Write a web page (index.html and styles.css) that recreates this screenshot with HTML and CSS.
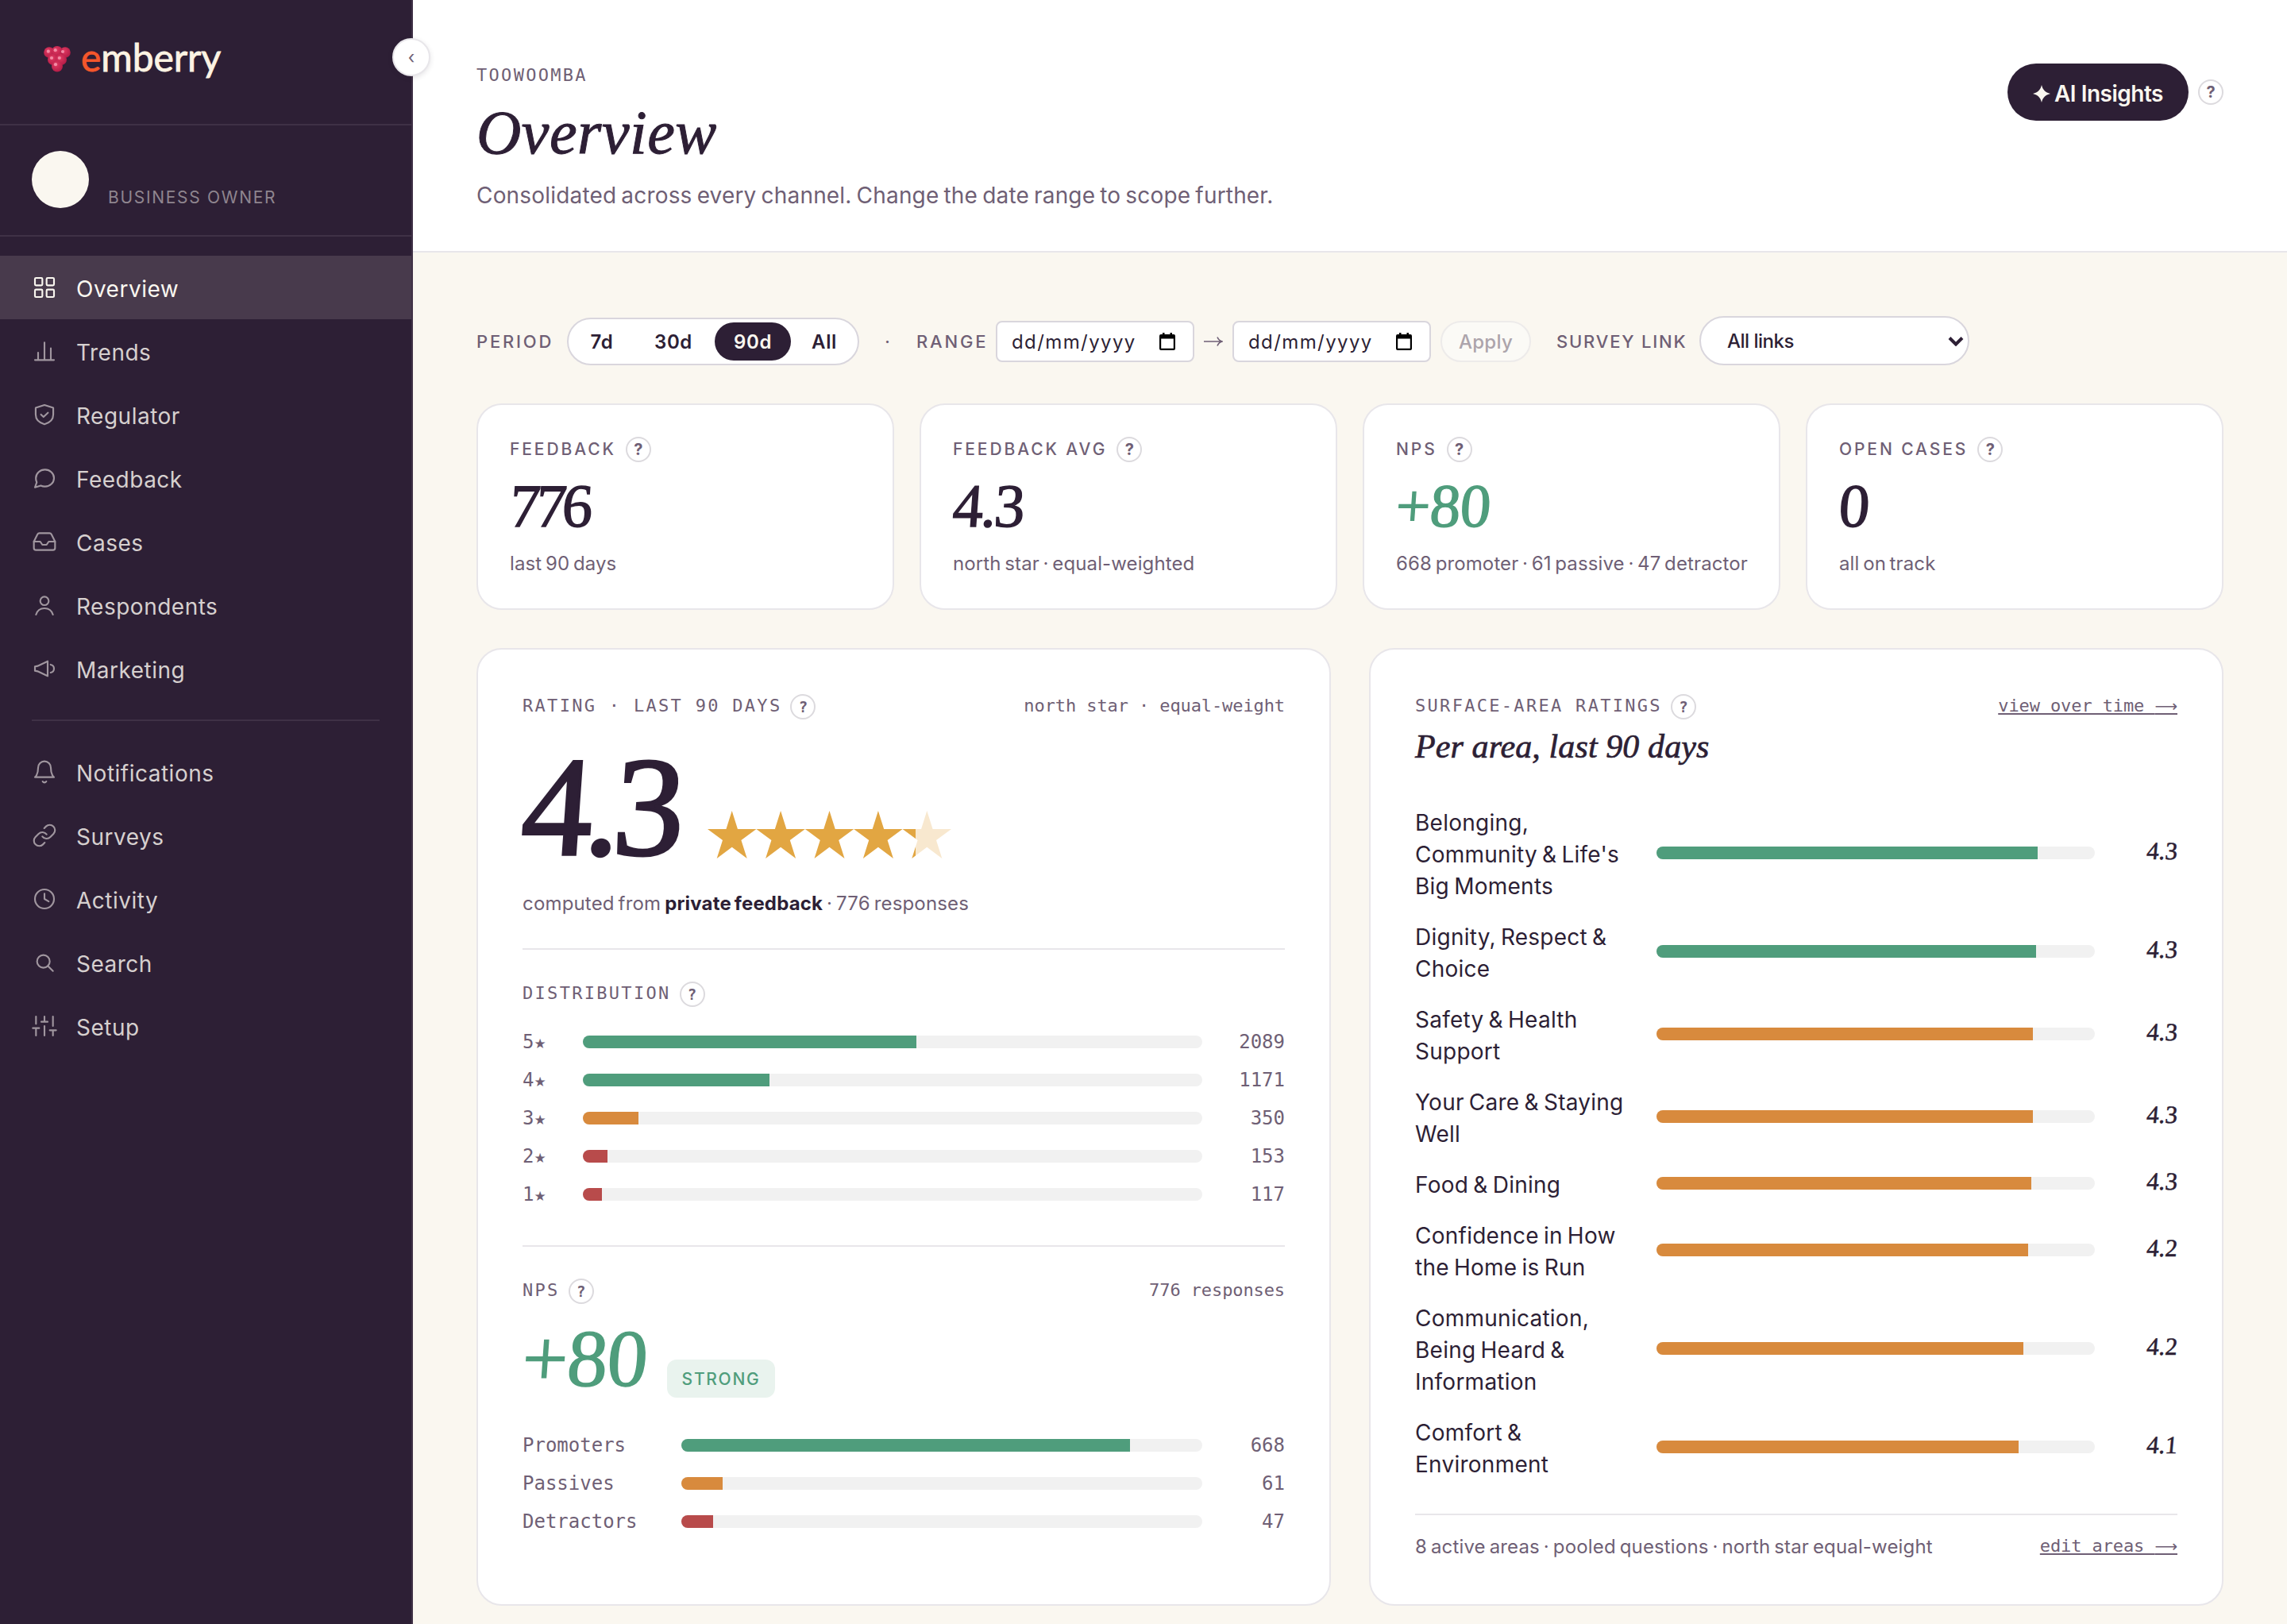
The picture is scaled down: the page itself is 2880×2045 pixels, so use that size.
FILE: index.html
```html
<!DOCTYPE html>
<html lang="en">
<head>
    <meta charset="UTF-8">
    <meta name="viewport" content="width=device-width, initial-scale=1.0">
    <title>Overview - emberry</title>
    <link rel="stylesheet" href="styles.css">
</head>
<body>
    <aside class="sidebar">
        <div class="brand">
            <svg class="brand-mark" viewBox="0 0 36 36">
                <defs>
                    <radialGradient id="drupe" cx="0.4" cy="0.35" r="0.7">
                        <stop offset="0" stop-color="#e23a62"/>
                        <stop offset="1" stop-color="#b01a45"/>
                    </radialGradient>
                </defs>
                <g fill="url(#drupe)">
                    <circle cx="8" cy="10" r="6.8"/>
                    <circle cx="28" cy="10" r="6.8"/>
                    <circle cx="18" cy="9.2" r="7.2"/>
                    <circle cx="13" cy="19" r="7"/>
                    <circle cx="23" cy="19" r="7"/>
                    <circle cx="18" cy="27.6" r="7"/>
                </g>
                <g fill="#f28ba4">
                    <circle cx="6.8" cy="8.7" r="2.1"/>
                    <circle cx="15.7" cy="7.2" r="2.1"/>
                    <circle cx="25" cy="9" r="2.1"/>
                    <circle cx="11" cy="17" r="2.1"/>
                    <circle cx="20.8" cy="17" r="2.1"/>
                    <circle cx="16" cy="25.2" r="2.1"/>
                </g>
            </svg>
            <span class="brand-name"><span class="brand-e">e</span>mberry</span>
        </div>
        <button class="collapse">‹</button>

        <div class="profile">
            <div class="avatar"></div>
            <div class="role">BUSINESS OWNER</div>
        </div>

        <nav class="nav">
            <a class="nav-item active">
                <svg viewBox="0 0 24 24"><rect x="3" y="3" width="7" height="7" rx="1"/><rect x="14" y="3" width="7" height="7" rx="1"/><rect x="3" y="14" width="7" height="7" rx="1"/><rect x="14" y="14" width="7" height="7" rx="1"/></svg>
                <span>Overview</span>
            </a>
            <a class="nav-item">
                <svg viewBox="0 0 24 24"><path d="M3 20.500h18M6 20v-6.500M12 20V4M18 20V9.500"/></svg>
                <span>Trends</span>
            </a>
            <a class="nav-item">
                <svg viewBox="0 0 24 24"><path d="M12 3l8.300 2.700v6.300c0 5-3.500 7.800-8.300 9.200-4.800-1.400-8.300-4.200-8.300-9.200V5.700z"/><path d="M8.700 12l2.400 2.300 4.200-4"/></svg>
                <span>Regulator</span>
            </a>
            <a class="nav-item">
                <svg viewBox="0 0 24 24"><path d="M21 12a8.400 8 0 0 1-8.500 8 9 9 0 0 1-4-.9L3 20.800l1.700-4.800a7.600 7.600 0 0 1-.8-4A8.500 8 0 0 1 12.500 4 8.400 8 0 0 1 21 12z"/></svg>
                <span>Feedback</span>
            </a>
            <a class="nav-item">
                <svg viewBox="0 0 24 24"><path d="M22 12h-6l-2 3h-4l-2-3H2"/><path d="M5.450 5.110L2 12v6a2 2 0 0 0 2 2h16a2 2 0 0 0 2-2v-6l-3.450-6.890A2 2 0 0 0 16.760 4H7.240a2 2 0 0 0-1.790 1.110z"/></svg>
                <span>Cases</span>
            </a>
            <a class="nav-item">
                <svg viewBox="0 0 24 24"><circle cx="12" cy="8" r="4"/><path d="M4 21c1.200-4 4.300-6 8-6s6.800 2 8 6"/></svg>
                <span>Respondents</span>
            </a>
            <a class="nav-item">
                <svg viewBox="0 0 24 24"><path d="M3 10v4l2.500.5L15 19V5L5.500 9.500z"/><path d="M17.800 8.200a3.800 3.800 0 0 1 0 7.500"/></svg>
                <span>Marketing</span>
            </a>

            <div class="nav-divider"></div>

            <a class="nav-item">
                <svg viewBox="0 0 24 24"><path d="M18 8A6 6 0 0 0 6 8c0 7-3 9-3 9h18s-3-2-3-9"/><path d="M13.730 21a2 2 0 0 1-3.460 0"/></svg>
                <span>Notifications</span>
            </a>
            <a class="nav-item">
                <svg viewBox="0 0 24 24"><path d="M10 13a5 5 0 0 0 7.540.54l3-3a5 5 0 0 0-7.070-7.070l-1.720 1.710"/><path d="M14 11a5 5 0 0 0-7.540-.54l-3 3a5 5 0 0 0 7.070 7.070l1.710-1.710"/></svg>
                <span>Surveys</span>
            </a>
            <a class="nav-item">
                <svg viewBox="0 0 24 24"><circle cx="12" cy="12" r="9"/><path d="M12 7v5l4 2.300"/></svg>
                <span>Activity</span>
            </a>
            <a class="nav-item">
                <svg viewBox="0 0 24 24"><circle cx="11" cy="11" r="6"/><path d="M20 20l-4.700-4.700"/></svg>
                <span>Search</span>
            </a>
            <a class="nav-item">
                <svg viewBox="0 0 24 24"><path d="M4 21v-7M4 10V3M12 21v-9M12 8V3M20 21v-5M20 12V3M1 14h6M9 8h6M17 16h6"/></svg>
                <span>Setup</span>
            </a>
        </nav>
    </aside>

    <main class="main">
        <header class="page-header">
            <div>
                <div class="site">TOOWOOMBA</div>
                <h1>Overview</h1>
                <p class="lede">Consolidated across every channel. Change the date range to scope further.</p>
            </div>
            <div class="header-actions">
                <button class="insights">
                    <svg viewBox="0 0 22 22"><path d="M11 0c1.600 6.400 4.600 9.400 11 11-6.400 1.600-9.400 4.600-11 11-1.600-6.400-4.600-9.400-11-11 6.400-1.600 9.400-4.600 11-11z"/></svg>
                    <span>AI Insights</span>
                </button>
                <span class="help">?</span>
            </div>
        </header>

        <div class="content">
            <!-- Filters -->
            <div class="filters">
                <div class="filter-group">
                    <span class="filter-label period">PERIOD</span>
                    <div class="segmented">
                        <button>7d</button>
                        <button>30d</button>
                        <button class="selected">90d</button>
                        <button>All</button>
                    </div>
                </div>
                <span class="dot">·</span>
                <div class="filter-group range-group">
                    <span class="filter-label range">RANGE</span>
                    <div class="date">
                        <span>dd/mm/yyyy</span>
                        <svg viewBox="0 0 20 22"><path fill-rule="evenodd" d="M4 0h2.500v2h7V0H16v2h2a2 2 0 0 1 2 2v16a2 2 0 0 1-2 2H2a2 2 0 0 1-2-2V4a2 2 0 0 1 2-2h2zM2.200 7.500v12.300h15.600V7.500z"/></svg>
                    </div>
                    <svg class="to" viewBox="0 0 24 16"><path d="M0 8h23M17 2.500c1.200 3 3 4.700 6 5.500-3 .8-4.800 2.500-6 5.500"/></svg>
                    <div class="date">
                        <span>dd/mm/yyyy</span>
                        <svg viewBox="0 0 20 22"><path fill-rule="evenodd" d="M4 0h2.500v2h7V0H16v2h2a2 2 0 0 1 2 2v16a2 2 0 0 1-2 2H2a2 2 0 0 1-2-2V4a2 2 0 0 1 2-2h2zM2.200 7.500v12.300h15.600V7.500z"/></svg>
                    </div>
                    <button class="apply" disabled>Apply</button>
                </div>
                <div class="filter-group">
                    <span class="filter-label survey">SURVEY LINK</span>
                    <div class="select">
                        <span>All links</span>
                        <svg viewBox="0 0 20 13"><path d="M2 2.500l8 8 8-8"/></svg>
                    </div>
                </div>
            </div>

            <!-- Headline numbers -->
            <section class="kpis">
                <div class="kpi">
                    <div class="kpi-label">FEEDBACK <span class="help">?</span></div>
                    <div class="kpi-value tight">776</div>
                    <div class="kpi-note">last 90 days</div>
                </div>
                <div class="kpi">
                    <div class="kpi-label">FEEDBACK AVG <span class="help">?</span></div>
                    <div class="kpi-value">4.3</div>
                    <div class="kpi-note">north star · equal-weighted</div>
                </div>
                <div class="kpi">
                    <div class="kpi-label">NPS <span class="help">?</span></div>
                    <div class="kpi-value good">+80</div>
                    <div class="kpi-note">668 promoter · 61 passive · 47 detractor</div>
                </div>
                <div class="kpi">
                    <div class="kpi-label">OPEN CASES <span class="help">?</span></div>
                    <div class="kpi-value">0</div>
                    <div class="kpi-note">all on track</div>
                </div>
            </section>

            <section class="panels">
                <div class="panel">
                    <div class="panel-head">
                        <span class="eyebrow">RATING · LAST 90 DAYS</span>
                        <span class="help mono">?</span>
                        <span class="aside">north star · equal-weight</span>
                    </div>
                    <div class="rating">
                        <span class="rating-value">4.3</span>
                        <svg class="stars" viewBox="0 0 307 60">
                            <defs>
                                <linearGradient id="score" gradientUnits="userSpaceOnUse" x1="0" y1="0" x2="307" y2="0">
                                    <stop offset="0.852" stop-color="#e2a642"/>
                                    <stop offset="0.852" stop-color="#f8e8cf"/>
                                </linearGradient>
                            </defs>
                            <path fill="url(#score)" d="M30.700 0l7.250 22.900h23.450l-19 14.200 7.300 22.900-19-14.200-19 14.200 7.300-22.900-19-14.200h23.450zM92.100 0l7.250 22.900h23.450l-19 14.200 7.300 22.900-19-14.200-19 14.200 7.300-22.900-19-14.200h23.450zM153.500 0l7.250 22.900h23.450l-19 14.200 7.300 22.900-19-14.200-19 14.200 7.300-22.900-19-14.200h23.450zM214.900 0l7.250 22.900h23.450l-19 14.200 7.300 22.900-19-14.200-19 14.200 7.300-22.900-19-14.200h23.450zM276.300 0l7.250 22.900h23.450l-19 14.200 7.300 22.900-19-14.200-19 14.200 7.300-22.900-19-14.200h23.450z"/>
                        </svg>
                    </div>
                    <p class="computed">computed from <strong>private feedback</strong> · 776 responses</p>

                    <hr class="rule">

                    <div class="panel-head">
                        <span class="eyebrow">DISTRIBUTION</span>
                        <span class="help mono">?</span>
                    </div>
                    <div class="bars distribution">
                        <div class="bar-row"><span>5<i>★</i></span><div class="track"><div class="fill green" style="width: 53.84%"></div></div><span class="count">2089</span></div>
                        <div class="bar-row"><span>4<i>★</i></span><div class="track"><div class="fill green" style="width: 30.18%"></div></div><span class="count">1171</span></div>
                        <div class="bar-row"><span>3<i>★</i></span><div class="track"><div class="fill amber" style="width: 9.02%"></div></div><span class="count">350</span></div>
                        <div class="bar-row"><span>2<i>★</i></span><div class="track"><div class="fill red" style="width: 3.94%"></div></div><span class="count">153</span></div>
                        <div class="bar-row"><span>1<i>★</i></span><div class="track"><div class="fill red" style="width: 3.02%"></div></div><span class="count">117</span></div>
                    </div>

                    <hr class="rule lower">

                    <div class="panel-head">
                        <span class="eyebrow">NPS</span>
                        <span class="help mono">?</span>
                        <span class="aside">776 responses</span>
                    </div>
                    <div class="nps">
                        <span class="nps-value">+80</span>
                        <span class="badge">STRONG</span>
                    </div>
                    <div class="bars breakdown">
                        <div class="bar-row"><span>Promoters</span><div class="track"><div class="fill green" style="width: 86.08%"></div></div><span class="count">668</span></div>
                        <div class="bar-row"><span>Passives</span><div class="track"><div class="fill amber" style="width: 7.86%"></div></div><span class="count">61</span></div>
                        <div class="bar-row"><span>Detractors</span><div class="track"><div class="fill red" style="width: 6.06%"></div></div><span class="count">47</span></div>
                    </div>
                </div>

                <div class="panel">
                    <div class="panel-head">
                        <span class="eyebrow">SURFACE-AREA RATINGS</span>
                        <span class="help mono">?</span>
                        <a class="aside link">view over time <span class="arrow">⟶</span></a>
                    </div>
                    <h2>Per area, last 90 days</h2>
                    <div class="areas">
                        <div class="area"><span class="area-name">Belonging, Community &amp; Life's Big Moments</span><div class="track"><div class="fill green" style="width: 87%"></div></div><span class="score">4.3</span></div>
                        <div class="area"><span class="area-name">Dignity, Respect &amp; Choice</span><div class="track"><div class="fill green" style="width: 86.6%"></div></div><span class="score">4.3</span></div>
                        <div class="area"><span class="area-name">Safety &amp; Health Support</span><div class="track"><div class="fill amber" style="width: 85.9%"></div></div><span class="score">4.3</span></div>
                        <div class="area"><span class="area-name">Your Care &amp; Staying Well</span><div class="track"><div class="fill amber" style="width: 85.9%"></div></div><span class="score">4.3</span></div>
                        <div class="area"><span class="area-name">Food &amp; Dining</span><div class="track"><div class="fill amber" style="width: 85.5%"></div></div><span class="score">4.3</span></div>
                        <div class="area"><span class="area-name">Confidence in How the Home is Run</span><div class="track"><div class="fill amber" style="width: 84.8%"></div></div><span class="score">4.2</span></div>
                        <div class="area"><span class="area-name">Communication, Being Heard &amp; Information</span><div class="track"><div class="fill amber" style="width: 83.7%"></div></div><span class="score">4.2</span></div>
                        <div class="area"><span class="area-name">Comfort &amp; Environment</span><div class="track"><div class="fill amber" style="width: 82.6%"></div></div><span class="score">4.1</span></div>
                    </div>
                    <div class="panel-foot">
                        <span class="foot-note">8 active areas · pooled questions · north star equal-weight</span>
                        <a class="aside link">edit areas <span class="arrow">⟶</span></a>
                    </div>
                </div>
            </section>
        </div>
    </main>
</body>
</html>
```
FILE: styles.css
```css
:root {
    --ink: #2d1f35;
    --muted: #6f5f75;
    --cream: #faf7f0;
    --line: #e8e6ea;
    --line-strong: #d9d6dd;
    --green: #4f9d7c;
    --amber: #d88a3d;
    --red: #b84b4b;
    --sans: Inter, "Liberation Sans", sans-serif;
    --serif: "Liberation Serif", serif;
    --mono: "DejaVu Sans Mono", "Liberation Mono", monospace;
}

* {
    box-sizing: border-box;
}

body {
    margin: 0;
    display: flex;
    height: 2045px;
    overflow: hidden;
    font-family: var(--sans);
    color: var(--ink);
    background-color: var(--cream);
}

h1, h2, p {
    margin: 0;
}

button {
    font-family: inherit;
    border: none;
    padding: 0;
    white-space: nowrap;
}

/* Sidebar */
.sidebar {
    position: relative;
    flex: none;
    width: 520px;
    background-color: var(--ink);
    border-right: 2px solid #3f3146;
}

.brand {
    display: flex;
    height: 158px;
    padding: 42px 0 0 54px;
    border-bottom: 2px solid #3f3146;
}

.brand-mark {
    width: 36px;
    height: 36px;
    margin-top: 14px;
}

.brand-name {
    margin-left: 12px;
    font-family: Lato, sans-serif;
    font-size: 48px;
    line-height: 60px;
    letter-spacing: -0.1px;
    color: #fcf3e3;
    -webkit-text-stroke: 0.8px;
}

.brand-e {
    color: #f4562b;
}

.collapse {
    position: absolute;
    top: 48px;
    right: -24px;
    width: 48px;
    height: 48px;
    border: 2px solid var(--line);
    border-radius: 50%;
    background-color: #fff;
    color: var(--muted);
    font-size: 22px;
    line-height: 40px;
    box-shadow: 0 2px 6px rgba(45, 31, 53, 0.12);
}

.profile {
    display: flex;
    height: 140px;
    padding: 32px 40px 33px;
    gap: 24px;
    border-bottom: 2px solid #3f3146;
}

.avatar {
    width: 72px;
    height: 72px;
    border-radius: 50%;
    background-color: var(--cream);
}

.role {
    align-self: flex-end;
    font-size: 21px;
    line-height: 28px;
    letter-spacing: 1.7px;
    color: #8f858f;
}

.nav {
    padding-top: 24px;
}

.nav-item {
    display: flex;
    align-items: center;
    height: 80px;
    padding: 0 40px;
    gap: 24px;
    font-size: 28px;
    letter-spacing: 0.5px;
    color: #d6d0cf;
}

.nav-item svg {
    width: 32px;
    height: 32px;
    fill: none;
    stroke: #a0969f;
    stroke-width: 1.6;
    stroke-linecap: round;
    stroke-linejoin: round;
}

.nav-item span {
    padding-top: 3px;
}

.nav-item.active {
    background-color: #483a4c;
    color: var(--cream);
}

.nav-item.active svg {
    stroke: var(--cream);
}

.nav-divider {
    height: 2px;
    margin: 24px 40px;
    background-color: #3f3146;
}

/* Page header */
.main {
    flex: 1;
    min-width: 0;
}

.page-header {
    display: flex;
    justify-content: space-between;
    align-items: flex-start;
    height: 318px;
    padding: 80px 80px 0;
    background-color: #fff;
    border-bottom: 2px solid var(--line);
}

.site {
    padding-top: 1px;
    font-family: var(--mono);
    font-size: 22px;
    line-height: 28px;
    letter-spacing: 2.3px;
    color: var(--muted);
}

h1 {
    margin-top: 18px;
    font-family: var(--serif);
    font-size: 78px;
    font-style: italic;
    font-weight: 400;
    line-height: 80px;
    letter-spacing: 0.5px;
    -webkit-text-stroke: 1px;
}

.lede {
    margin-top: 17px;
    font-size: 28px;
    line-height: 44px;
    word-spacing: -2px;
    letter-spacing: 0.18px;
    color: var(--muted);
}

.header-actions {
    display: flex;
    align-items: center;
    gap: 12px;
}

.insights {
    display: flex;
    align-items: center;
    width: 228px;
    height: 72px;
    padding: 3px 0 0 32px;
    gap: 5px;
    border-radius: 36px;
    background-color: var(--ink);
    color: var(--cream);
    font-size: 28px;
    font-weight: 600;
    letter-spacing: -0.5px;
}

.insights svg {
    width: 22px;
    height: 22px;
    fill: var(--cream);
}

.help {
    display: inline-flex;
    align-items: center;
    justify-content: center;
    width: 32px;
    height: 32px;
    border: 2px solid #dcdade;
    border-radius: 50%;
    background-color: #fff;
    color: var(--muted);
    font-size: 20px;
    font-weight: 700;
    letter-spacing: 0;
}

.help.mono {
    font-family: var(--mono);
    font-size: 19px;
}

/* Filters */
.content {
    padding: 80px 80px 0;
}

.filters {
    display: flex;
    align-items: center;
    height: 64px;
    gap: 32px;
}

.filter-group {
    display: flex;
    align-items: center;
}

.filter-label {
    font-size: 22px;
    font-weight: 500;
    letter-spacing: 2.8px;
    white-space: nowrap;
    color: var(--muted);
}

.filter-label.period {
    width: 114px;
}

.filter-label.range {
    width: 88px;
}

.filter-label.survey {
    width: 180px;
    letter-spacing: 1.8px;
}

.segmented {
    display: grid;
    grid-template-columns: 76px 96px 96px 1fr;
    width: 368px;
    height: 60px;
    padding: 4px;
    gap: 4px;
    border: 2px solid var(--line-strong);
    border-radius: 30px;
    background-color: #fff;
}

.segmented button {
    border-radius: 24px;
    background: none;
    color: var(--ink);
    font-size: 24px;
    font-weight: 600;
    letter-spacing: 0.6px;
}

.segmented button.selected {
    background-color: var(--ink);
    color: var(--cream);
}

.dot {
    width: 8px;
    font-size: 24px;
    color: var(--muted);
}

.range-group {
    gap: 12px;
}

.date {
    display: flex;
    align-items: center;
    justify-content: space-between;
    width: 250px;
    height: 52px;
    padding: 0 22px 0 18px;
    border: 2px solid var(--line-strong);
    border-radius: 8px;
    background-color: #fff;
    font-size: 24px;
    letter-spacing: 1.4px;
}

.date svg {
    width: 20px;
    height: 22px;
    fill: #000;
}

.to {
    width: 24px;
    height: 16px;
    fill: none;
    stroke: var(--muted);
    stroke-width: 1.6;
}

.apply {
    width: 114px;
    height: 52px;
    border: 2px solid #edebea;
    border-radius: 26px;
    background-color: #fbfaf6;
    color: #aca4ab;
    font-size: 24px;
    font-weight: 500;
    letter-spacing: 0.3px;
}

.select {
    display: flex;
    align-items: center;
    justify-content: space-between;
    width: 340px;
    height: 62px;
    margin-bottom: 2px;
    padding: 0 5px 0 33px;
    border: 2px solid var(--line-strong);
    border-radius: 31px;
    background-color: #fff;
    font-size: 24px;
    font-weight: 500;
    letter-spacing: -0.5px;
}

.select svg {
    width: 20px;
    height: 13px;
    fill: none;
    stroke: var(--ink);
    stroke-width: 4;
}

/* Headline numbers */
.kpis {
    display: grid;
    grid-template-columns: repeat(4, 1fr);
    gap: 32px;
    margin-top: 46px;
}

.kpi {
    height: 260px;
    padding: 40px 38px 0 40px;
    border: 2px solid var(--line);
    border-radius: 32px;
    background-color: #fff;
}

.kpi-label {
    display: flex;
    align-items: center;
    gap: 12px;
    font-size: 21px;
    font-weight: 450;
    line-height: 32px;
    letter-spacing: 2.9px;
    color: var(--muted);
}

/* upright figures with a slight lean */
.kpi-value {
    margin-top: 15px;
    font-family: var(--serif);
    font-size: 77px;
    line-height: 80px;
    letter-spacing: -2.7px;
    transform: skewX(-4deg);
    -webkit-text-stroke: 1.4px;
}

.kpi-value.tight {
    letter-spacing: -5.5px;
}

.kpi-value.good {
    color: var(--green);
    letter-spacing: -0.4px;
}

.kpi-note {
    margin-top: 15px;
    font-size: 24px;
    line-height: 36px;
    word-spacing: -2.2px;
    letter-spacing: 0.12px;
    white-space: nowrap;
    color: var(--muted);
}

/* Panels */
.panels {
    display: grid;
    grid-template-columns: 1fr 1fr;
    gap: 48px;
    margin-top: 48px;
}

.panel {
    height: 1206px;
    padding: 56px 56px 0;
    border: 2px solid var(--line);
    border-radius: 32px;
    background-color: #fff;
}

.panel-head {
    display: flex;
    align-items: center;
    height: 32px;
    gap: 11px;
}

.eyebrow {
    padding-bottom: 3px;
    font-family: var(--mono);
    font-size: 22px;
    letter-spacing: 2.3px;
    color: var(--muted);
}

.aside {
    margin-left: auto;
    padding-bottom: 3px;
    font-family: var(--mono);
    font-size: 22px;
    letter-spacing: -0.1px;
    color: var(--muted);
}

.link {
    text-decoration: underline;
    text-decoration-thickness: 2px;
    text-underline-offset: 2px;
}

.arrow {
    font-family: "DejaVu Sans", sans-serif;
    font-size: 20px;
}

.rating {
    display: flex;
    align-items: flex-end;
    margin-top: 30px;
}

.rating-value {
    width: 233px;
    font-family: var(--serif);
    font-size: 178px;
    line-height: 160px;
    letter-spacing: -9px;
    transform: skewX(-4deg);
    -webkit-text-stroke: 3.5px;
}

.stars {
    width: 307px;
    height: 60px;
    margin-bottom: 15px;
}

.computed {
    margin-top: 24px;
    font-size: 24px;
    line-height: 36px;
    word-spacing: -2px;
    letter-spacing: 0.17px;
    color: var(--muted);
}

.computed strong {
    color: var(--ink);
}

.rule {
    height: 2px;
    margin: 38px 0 40px;
    border: none;
    background-color: var(--line);
}

.rule.lower {
    margin-top: 48px;
}

.bars {
    display: grid;
    gap: 16px;
}

.bar-row {
    display: grid;
    align-items: center;
    height: 32px;
    gap: 24px;
    font-family: var(--mono);
    font-size: 24px;
    color: var(--muted);
}

.distribution {
    margin-top: 28px;
}

.distribution .bar-row {
    grid-template-columns: 52px 1fr 80px;
}

.breakdown {
    margin-top: 41px;
}

.breakdown .bar-row {
    grid-template-columns: 176px 1fr 80px;
}

.bar-row i {
    font-family: "DejaVu Sans", sans-serif;
    font-style: normal;
    font-size: 17px;
    line-height: 1;
}

.count {
    text-align: right;
}

.track {
    height: 16px;
    border-radius: 8px;
    overflow: hidden;
    background-color: #f1f1f1;
}

.fill {
    height: 100%;
}

.fill.green {
    background-color: var(--green);
}

.fill.amber {
    background-color: var(--amber);
}

.fill.red {
    background-color: var(--red);
}

.nps {
    display: flex;
    align-items: flex-end;
    margin-top: 17px;
}

.nps-value {
    width: 182px;
    font-family: var(--serif);
    font-size: 102px;
    line-height: 104px;
    letter-spacing: -0.8px;
    color: var(--green);
    transform: skewX(-4deg);
    -webkit-text-stroke: 1.4px;
}

.badge {
    width: 136px;
    height: 48px;
    margin-bottom: 3px;
    border-radius: 12px;
    background-color: #e9f3ee;
    color: var(--green);
    font-size: 21px;
    font-weight: 450;
    line-height: 49px;
    letter-spacing: 1.7px;
    text-align: center;
}

/* Area ratings */
h2 {
    margin-top: 8px;
    font-family: var(--serif);
    font-size: 42px;
    font-style: italic;
    font-weight: 400;
    line-height: 52px;
    letter-spacing: 0.1px;
    -webkit-text-stroke: 0.7px;
}

.areas {
    display: grid;
    gap: 24px;
    margin-top: 48px;
}

.area {
    display: grid;
    grid-template-columns: 280px 1fr 80px;
    align-items: center;
    gap: 24px;
}

.area-name {
    padding: 2px 14px 0 0;
    margin-bottom: -2px;
    font-size: 28px;
    line-height: 40px;
    word-spacing: -2px;
    letter-spacing: 0.25px;
}

.score {
    padding-bottom: 5px;
    font-family: var(--serif);
    font-size: 31px;
    line-height: 35px;
    text-align: right;
    transform: skewX(-5deg);
    -webkit-text-stroke: 0.6px;
}

.panel-foot {
    display: flex;
    align-items: center;
    justify-content: space-between;
    margin-top: 44px;
    padding-top: 22px;
    border-top: 2px solid var(--line);
}

.foot-note {
    font-size: 24px;
    line-height: 36px;
    word-spacing: -2px;
    letter-spacing: 0.16px;
    color: var(--muted);
}
```
